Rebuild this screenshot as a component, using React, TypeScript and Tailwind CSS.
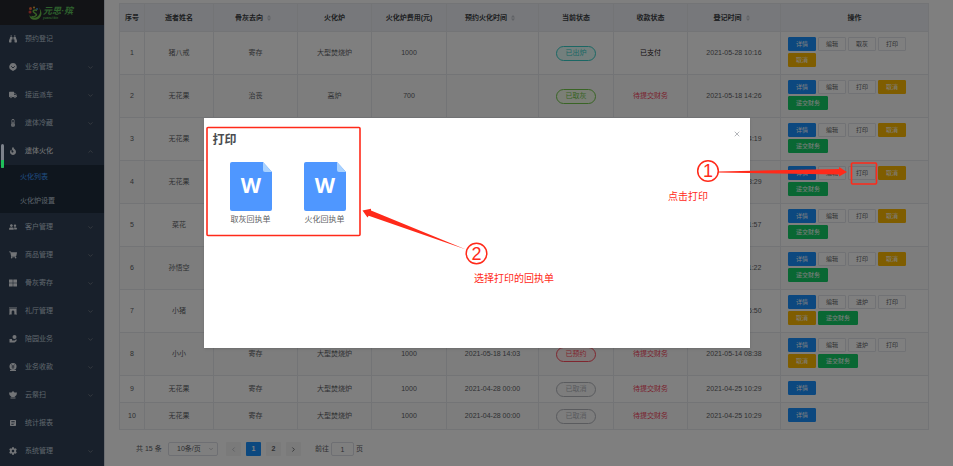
import React from "react";
import {
  FaBinoculars,
  FaTruck,
  FaThermometerHalf,
  FaFire,
  FaUserFriends,
  FaShoppingCart,
  FaThLarge,
  FaArchway,
  FaCog,
} from "react-icons/fa";
import { MdArticle } from "react-icons/md";
import { ChevronDown, ChevronUp, ChevronLeft, ChevronRight, X } from "lucide-react";

const GardenIcon = () => (
  <svg viewBox="0 0 16 16" className="h-2 w-2" fill="currentColor" aria-hidden="true">
    <circle cx="11" cy="4" r="4" />
    <path d="M1 8h5v3h5l4-3v4l-4 3H1z" />
  </svg>
);

const CollectIcon = () => (
  <svg viewBox="0 0 16 16" className="h-2 w-2" aria-hidden="true">
    <circle cx="8" cy="7" r="7" fill="currentColor" />
    <path d="M2 14h12v2H2z" fill="currentColor" />
    <path d="M5 3l3 4 3-4M5 8h6M8 7v5" stroke="#304156" strokeWidth="1.4" fill="none" />
  </svg>
);

const LotusIcon = () => (
  <svg viewBox="0 0 16 16" className="h-2 w-2" fill="currentColor" aria-hidden="true">
    <path d="M8 0l3 3 5 0-1 5-4 4H5L1 8 0 3h5zM3 13h10v2H3z" />
  </svg>
);

const FaceIcon = () => (
  <svg viewBox="0 0 16 16" className="h-2 w-2" aria-hidden="true">
    <path d="M8 0a7.500 7.500 0 0 1 5 13l-5 3-5-3A7.500 7.500 0 0 1 8 0z" fill="currentColor" />
    <path d="M4.500 6.500L8 10l3.500-3.500" stroke="#304156" strokeWidth="1.800" fill="none" />
  </svg>
);

type NavItem = { label: string; icon: React.ReactNode; arrow?: boolean };

const topNav: NavItem[] = [
  { label: "预约登记", icon: <FaBinoculars /> },
  { label: "业务管理", icon: <FaceIcon />, arrow: true },
  { label: "接运派车", icon: <FaTruck />, arrow: true },
  { label: "遗体冷藏", icon: <FaThermometerHalf />, arrow: true },
];

const bottomNav: NavItem[] = [
  { label: "客户管理", icon: <FaUserFriends />, arrow: true },
  { label: "商品管理", icon: <FaShoppingCart />, arrow: true },
  { label: "骨灰寄存", icon: <FaThLarge />, arrow: true },
  { label: "礼厅管理", icon: <FaArchway />, arrow: true },
  { label: "陪园业务", icon: <GardenIcon />, arrow: true },
  { label: "业务收款", icon: <CollectIcon />, arrow: true },
  { label: "云祭扫", icon: <LotusIcon />, arrow: true },
  { label: "统计报表", icon: <MdArticle /> },
  { label: "系统管理", icon: <FaCog />, arrow: true },
];

function NavRow({ item, open }: { item: NavItem; open?: boolean }) {
  return (
    <button
      type="button"
      className={`flex h-7 w-full items-center pl-[9px] pr-[10px] text-left ${open ? "text-[#f4f4f5]" : "text-[#bfcbd9]"}`}
    >
      <span className="mr-2 flex w-2 shrink-0 justify-center text-[8px] text-[#e4e8ee]">{item.icon}</span>
      <span className="flex-1">{item.label}</span>
      {item.arrow &&
        (open ? (
          <ChevronUp className="h-[7px] w-[7px] text-[#909399]" />
        ) : (
          <ChevronDown className="h-[7px] w-[7px] text-[#909399]" />
        ))}
    </button>
  );
}

function Sidebar() {
  return (
    <aside className="w-[104px] shrink-0 bg-[#304156]">
      <div className="flex h-[25px] items-center gap-px bg-[#25262d] pl-7">
        <svg viewBox="0 0 28 28" className="h-[14px] w-[14px]" aria-hidden="true">
          <circle cx="5" cy="5" r="3" fill="#e8623a" />
          <circle cx="12" cy="3" r="2" fill="#f0b03c" />
          <circle cx="4" cy="12" r="3" fill="#d8443c" />
          <circle cx="18" cy="6" r="2" fill="#3c8ce8" />
          <path d="M3 18c3 5 9 7 15 4 7-4 8-12 4-19 6 8 7 16 0 22-7 5-19 3-19-7z" fill="#6cc24a" />
          <path d="M18 9c-5-3-10 1-6 4s7 4 3 7-8 1-8 1" stroke="#6cc24a" strokeWidth="3" fill="none" />
        </svg>
        <div className="flex flex-col font-bold italic text-[#5cc05a]">
          <span className="text-[9px] leading-[10px]">元思·殡</span>
          <span className="text-[3px] leading-[4px]">yuansi·bin</span>
        </div>
      </div>
      <nav>
        {topNav.map((i) => (
          <NavRow key={i.label} item={i} />
        ))}
        <NavRow item={{ label: "遗体火化", icon: <FaFire />, arrow: true }} open />
        <div className="bg-[#1f2d3d]">
          <a href="#list" className="flex h-6 items-center pl-5 text-[#409eff]">
            火化列表
          </a>
          <a href="#settings" className="flex h-6 items-center pl-5 text-[#bfcbd9]">
            火化炉设置
          </a>
        </div>
        {bottomNav.map((i) => (
          <NavRow key={i.label} item={i} />
        ))}
      </nav>
    </aside>
  );
}

type Tone = "teal" | "green" | "red" | "gray";
type Row = {
  name: string;
  ashes?: string;
  furnace?: string;
  cost?: string;
  booked?: string;
  status?: [string, Tone];
  paid?: string;
  created: string;
  actions: string[];
};

const unpaid = "待提交财务";
const standard = ["详情", "编辑", "打印", "取消", "递交财务"];
const pending = ["详情", "编辑", "进炉", "打印", "取消", "递交财务"];

const rows: Row[] = [
  { name: "猪八戒", ashes: "寄存", furnace: "大型焚烧炉", cost: "1000", status: ["已出炉", "teal"], paid: "已支付", created: "2021-05-28 10:16", actions: ["详情", "编辑", "取灰", "打印", "取消"] },
  { name: "无花果", ashes: "治丧", furnace: "高炉", cost: "700", status: ["已取灰", "green"], paid: unpaid, created: "2021-05-18 14:26", actions: standard },
  { name: "无花果", created: "2021-05-18 14:19", actions: standard },
  { name: "无花果", created: "2021-05-18 13:29", actions: standard },
  { name: "菜花", created: "2021-05-18 11:57", actions: standard },
  { name: "孙悟空", created: "2021-05-18 11:22", actions: standard },
  { name: "小猪", created: "2021-05-14 16:50", actions: pending },
  { name: "小小", ashes: "寄存", furnace: "大型焚烧炉", cost: "1000", booked: "2021-05-18 14:03", status: ["已预约", "red"], paid: unpaid, created: "2021-05-14 08:38", actions: pending },
  { name: "无花果", ashes: "寄存", furnace: "大型焚烧炉", cost: "1000", booked: "2021-04-28 00:00", status: ["已取消", "gray"], paid: unpaid, created: "2021-04-25 10:29", actions: ["详情"] },
  { name: "无花果", ashes: "寄存", furnace: "大型焚烧炉", cost: "1000", booked: "2021-04-28 00:00", status: ["已取消", "gray"], paid: unpaid, created: "2021-04-25 10:29", actions: ["详情"] },
];

const tones: Record<Tone, string> = {
  teal: "border-[#36cfc9] bg-[#e6fffb] text-[#36cfc9]",
  green: "border-[#73c94a] bg-[#f6ffed] text-[#73c94a]",
  red: "border-[#ff4d5f] bg-[#fff1f0] text-[#ff4d5f]",
  gray: "border-[#b4b7bd] bg-[#fafafa] text-[#b4b7bd]",
};

const actionTones: Record<string, string> = {
  详情: "border-[#1890ff] bg-[#1890ff] text-white",
  取消: "border-[#ffba00] bg-[#ffba00] text-white",
  递交财务: "border-[#13ce66] bg-[#13ce66] text-white",
};

const columns: { label: string; width: string; sort?: boolean }[] = [
  { label: "序号", width: "w-[25px]" },
  { label: "逝者姓名", width: "w-[69px]" },
  { label: "骨灰去向", width: "w-[84px]", sort: true },
  { label: "火化炉", width: "w-[74px]" },
  { label: "火化炉费用(元)", width: "w-[75px]" },
  { label: "预约火化时间", width: "w-[92px]", sort: true },
  { label: "当前状态", width: "w-[75px]" },
  { label: "收款状态", width: "w-[74px]" },
  { label: "登记时间", width: "w-[93px]", sort: true },
  { label: "操作", width: "w-auto" },
];

const cell = "border border-[#e6e8ec] p-0 text-center";

function DataTable() {
  return (
    <table className="w-full table-fixed border-collapse text-[#606266]">
      <thead>
        <tr className="h-[28px] bg-[#eef1f6] text-[#3c3f44]">
          {columns.map((c) => (
            <th key={c.label} className={`${cell} ${c.width} font-bold`}>
              <span className="inline-flex items-center whitespace-nowrap">
                {c.label}
                {c.sort && (
                  <svg viewBox="0 0 8 12" className="ml-1 mr-[5px] h-[6px] w-1" fill="#c0c4cc" aria-hidden="true">
                    <path d="M4 0l4 5H0zM4 12l4-5H0z" />
                  </svg>
                )}
              </span>
            </th>
          ))}
        </tr>
      </thead>
      <tbody>
        {rows.map((r, i) => (
          <tr key={i} className={`${r.actions.length > 1 ? "h-[43px]" : "h-[27px]"} even:bg-[#fafafa]`}>
            <td className={cell}>{i + 1}</td>
            <td className={cell}>{r.name}</td>
            <td className={cell}>{r.ashes}</td>
            <td className={cell}>{r.furnace}</td>
            <td className={cell}>{r.cost}</td>
            <td className={cell}>{r.booked}</td>
            <td className={cell}>
              {r.status && (
                <span className={`mx-auto flex h-[15px] w-10 items-center justify-center rounded-full border ${tones[r.status[1]]}`}>
                  {r.status[0]}
                </span>
              )}
            </td>
            <td className={`${cell} ${r.paid === unpaid ? "text-[#f5455c]" : "text-[#1f2023]"}`}>{r.paid}</td>
            <td className={cell}>{r.created}</td>
            <td className={cell}>
              <div className="flex flex-wrap gap-x-[2px] gap-y-[2px] pb-[7px] pl-[7px] pr-5 pt-[5px]">
                {r.actions.map((a) => (
                  <button
                    key={a}
                    type="button"
                    className={`flex h-[14px] items-center rounded-[1px] border px-[7px] text-[6px] leading-[8px] ${actionTones[a] ?? "border-[#e2e4ea] bg-white text-[#606266]"}`}
                  >
                    {a}
                  </button>
                ))}
              </div>
            </td>
          </tr>
        ))}
      </tbody>
    </table>
  );
}

function Pagination() {
  const pager = "flex h-[14px] w-[15px] items-center justify-center rounded-[1px] font-bold";
  return (
    <div className="flex items-center pl-[17px] pt-3 text-[#606266]">
      <span className="w-8 whitespace-nowrap">共 15 条</span>
      <div className="relative">
        <select
          aria-label="每页条数"
          className="block h-[14px] w-[50px] appearance-none rounded-[2px] border border-[#dcdfe6] bg-white pl-2 leading-[10px]"
        >
          <option>10条/页</option>
        </select>
        <ChevronDown className="pointer-events-none absolute right-1 top-1 h-[6px] w-[6px] text-[#909399]" />
      </div>
      <div className="ml-2 flex gap-[5px]">
        <button type="button" aria-label="上一页" className={`${pager} bg-[#f4f4f5] text-[#a0a3aa]`}>
          <ChevronLeft className="h-[7px] w-[7px]" />
        </button>
        <button type="button" className={`${pager} bg-[#1890ff] text-white`}>1</button>
        <button type="button" className={`${pager} bg-[#f4f4f5]`}>2</button>
        <button type="button" aria-label="下一页" className={`${pager} bg-[#f4f4f5]`}>
          <ChevronRight className="h-[7px] w-[7px]" strokeWidth={3} />
        </button>
      </div>
      <label className="ml-[14px] flex items-center gap-[2px]">
        前往
        <input defaultValue="1" className="h-[14px] w-[23px] rounded-[2px] border border-[#dcdfe6] bg-white text-center" />
        <span>页</span>
      </label>
    </div>
  );
}

function WordFile({ label }: { label: string }) {
  return (
    <button type="button" className="flex w-[42px] flex-col items-center gap-1">
      <svg viewBox="0 0 42 49" className="h-[49px] w-[42px]" aria-hidden="true">
        <path d="M2 0h31l9 10v37a2 2 0 0 1-2 2H2a2 2 0 0 1-2-2V2a2 2 0 0 1 2-2z" fill="#4f97ff" />
        <path d="M33 0l9 10h-7a2 2 0 0 1-2-2z" fill="#a9d2ff" />
        <text x="21" y="31" textAnchor="middle" fontSize="21" fontWeight="700" fill="#fff" fontFamily="Open Sans, sans-serif">
          W
        </text>
      </svg>
      <span className="whitespace-nowrap text-[8px] leading-[10px] text-[#606266]">{label}</span>
    </button>
  );
}

function PrintDialog() {
  return (
    <div className="absolute inset-0 flex items-start justify-center bg-black/50 pt-[118px]">
      <section role="dialog" aria-label="打印" className="min-h-[230px] w-[546px] bg-white px-[9px] pt-3 shadow-sm">
        <header className="flex items-start justify-between">
          <h2 className="text-[12px] font-bold leading-5 text-[#4a4c50]">打印</h2>
          <button type="button" aria-label="关闭">
            <X className="h-2 w-2 text-[#909399]" strokeWidth={2} />
          </button>
        </header>
        <div className="flex gap-8 pl-[17px] pt-3">
          <WordFile label="取灰回执单" />
          <WordFile label="火化回执单" />
        </div>
      </section>
    </div>
  );
}

function Annotations() {
  return (
    <svg
      viewBox="0 0 953 466"
      className="pointer-events-none absolute left-0 top-0 h-[466px] w-[953px]"
      fill="none"
      stroke="#ff2a1a"
      fontFamily="Liberation Sans, Noto Sans CJK SC, sans-serif"
    >
      <rect x="207" y="127.500" width="153" height="108" rx="1" strokeWidth="1.600" />
      <rect x="851.500" y="163" width="25" height="21" rx="1" strokeWidth="1.600" />
      <circle cx="708" cy="171" r="10.300" strokeWidth="1.500" />
      <circle cx="476.500" cy="253.500" r="10.300" strokeWidth="1.500" />
      <g fill="#ff2a1a" stroke="none">
        <path d="M718 171.500l121-2.500v-2l8 5-8 4.500v-2l-121-2z" />
        <path d="M466 249.500L371 210.500l0-1.700-8.500 1.700 5 7 1.200-1.700z" />
        <text x="708" y="177" fontSize="18" textAnchor="middle">1</text>
        <text x="476.500" y="260" fontSize="18" textAnchor="middle">2</text>
        <text x="668" y="200" fontSize="10">点击打印</text>
        <text x="474" y="282" fontSize="10">选择打印的回执单</text>
      </g>
    </svg>
  );
}

export default function App() {
  return (
    <div className="relative flex min-h-screen overflow-hidden bg-white font-['Liberation_Sans','Noto_Sans_CJK_SC',sans-serif] text-[7px] leading-[10px]">
      <Sidebar />
      <main className="min-w-0 flex-1 border-l border-[#d8dce5] pl-[14px] pr-6 pt-[3px]">
        <DataTable />
        <Pagination />
      </main>
      <PrintDialog />
      <div className="absolute left-px top-[144px] h-6 w-[3px] overflow-hidden rounded-full bg-[#7d828b]">
        <div className="mt-4 h-2 bg-[#1fc05a]" />
      </div>
      <Annotations />
    </div>
  );
}
